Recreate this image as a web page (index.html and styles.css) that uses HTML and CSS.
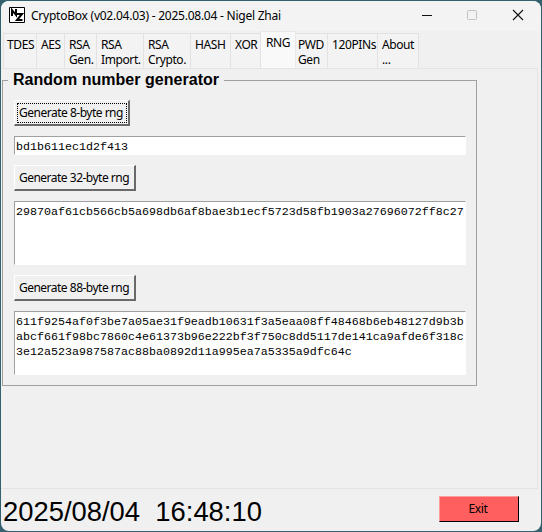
FILE: index.html
```html
<!DOCTYPE html>
<html lang="en">
<head>
<meta charset="utf-8">
<title>CryptoBox</title>
<link rel="stylesheet" href="styles.css">
</head>
<body>
<main class="window">
  <header class="titlebar">
    <svg class="logo" width="16" height="16" viewBox="0 0 16 16"><path d="M.5.5h15v15H.5z" fill="#fff" stroke="#000"/><path d="M3 9V3l4 5V2M8 7h5l-5 6h5.5" fill="none" stroke="#000" stroke-width="2"/></svg>
    <h1 class="title">CryptoBox (v02.04.03) - 2025.08.04 - Nigel Zhai</h1>
    <svg class="controls" width="110" height="16" viewBox="0 0 110 16" fill="none"><path d="M1 8.5h10" stroke="#111"/><rect x="46.5" y="3.5" width="9" height="9" rx="1" stroke="#c2c2c2"/><path d="M92 3l10 10M102 3L92 13" stroke="#111" stroke-width="1.1"/></svg>
  </header>
  <nav class="tabs">
    <div class="tab tdes">TDES</div>
    <div class="tab aes">AES</div>
    <div class="tab gen">RSA<br>Gen.</div>
    <div class="tab import">RSA<br>Import.</div>
    <div class="tab crypto">RSA<br>Crypto.</div>
    <div class="tab hash">HASH</div>
    <div class="tab xor">XOR</div>
    <div class="tab rng active">RNG</div>
    <div class="tab pwd">PWD<br>Gen</div>
    <div class="tab pins">120PINs</div>
    <div class="tab about">About<br>...</div>
  </nav>
  <section class="panel">
    <fieldset class="group">
      <legend>Random number generator</legend>
      <button class="btn short focused">Generate 8-byte rng</button>
      <div class="output single">bd1b611ec1d2f413</div>
      <button class="btn">Generate 32-byte rng</button>
      <div class="output">29870af61cb566cb5a698db6af8bae3b1ecf5723d58fb1903a27696072ff8c27</div>
      <button class="btn">Generate 88-byte rng</button>
      <div class="output">611f9254af0f3be7a05ae31f9eadb10631f3a5eaa08ff48468b6eb48127d9b3babcf661f98bc7860c4e61373b96e222bf3f750c8dd5117de141ca9afde6f318c3e12a523a987587ac88ba0892d11a995ea7a5335a9dfc64c</div>
    </fieldset>
  </section>
  <footer class="footer">
    <div class="clock">2025/08/04  16:48:10</div>
    <button class="exit">Exit</button>
  </footer>
</main>
</body>
</html>
```
FILE: styles.css
```css
* { box-sizing: border-box; }
body {
  margin: 0;
  width: 542px;
  height: 532px;
  overflow: hidden;
  background: #35616f;
  color: #000;
  font: 12px/15px "Noto Sans", sans-serif;
}
.window {
  display: flex;
  flex-direction: column;
  width: 540px;
  height: 530px;
  margin: 1px;
  border-radius: 8px;
  overflow: hidden;
  background: #f0f0f0;
}
.titlebar {
  display: flex;
  align-items: center;
  height: 30px;
  padding: 0 8px 2px 8px;
  background: #f3f3f3;
}
.logo { flex: none; }
.title {
  margin: 0 0 0 6px;
  font-size: 12px;
  font-weight: 400;
  letter-spacing: -.24px;
  white-space: nowrap;
}
.controls { margin-left: auto; margin-right: 2px; }
.tabs {
  display: flex;
  align-items: flex-end;
  height: 37px;
  padding-left: 2px;
}
.tab {
  height: 35px;
  padding: 3px 0 0 3px;
  border: 1px solid #e2e2e2;
  border-width: 1px 1px 0 0;
  background: #f3f3f3;
  letter-spacing: -.4px;
  white-space: nowrap;
}
.tab.active {
  height: 37px;
  padding-top: 3px;
  padding-left: 5px;
  border-color: #e8e8e8;
  background: #f9f9f9;
}
.tdes { width: 34px; border-left-width: 1px; }
.aes { width: 28px; padding-left: 4px; }
.gen { width: 32px; padding-left: 4px; }
.import { width: 47px; padding-left: 4px; }
.crypto { width: 47px; padding-left: 4px; }
.hash { width: 40px; padding-left: 4px; }
.xor { width: 30px; padding-left: 4px; }
.rng { width: 35px; }
.pwd { width: 32px; padding-left: 2px; }
.pins { width: 50px; padding-left: 4px; }
.about { width: 41px; padding-left: 4px; }
.panel {
  width: 537px;
  height: 421px;
  padding: 2px 0 0 1px;
  border: 1px solid #e3e3e3;
  border-left: 0;
}
.group {
  display: flex;
  flex-direction: column;
  align-items: flex-start;
  gap: 10px;
  width: 475px;
  height: 315px;
  margin: 0;
  padding: 11px 10px 0 11px;
  border: 1px solid #a0a0a0;
}
.group legend {
  height: 18px;
  margin-left: -6px;
  padding: 0 5px;
  font: bold 16px/17px "Liberation Sans", sans-serif;
  letter-spacing: .03px;
}
.btn {
  width: 122px;
  height: 26px;
  margin: 0;
  padding: 0 1px 1px 0;
  border: 1px solid #fff;
  border-right: 2px solid #696969;
  border-bottom: 2px solid #696969;
  background: #f0f0f0;
  color: #000;
  font: 12px/15px "Noto Sans", sans-serif;
  letter-spacing: -.5px;
  white-space: nowrap;
}
.btn.short { width: 116px; }
.btn.focused { outline: 1px dotted #000; outline-offset: -4px; }
.output {
  width: 452px;
  height: 64px;
  padding: 3px 1px 0;
  border: 1px solid #a0a0a0;
  border-right-color: #fff;
  border-bottom-color: #fff;
  background: #fff;
  font: 11.66px/15px "Liberation Mono", monospace;
  overflow-wrap: anywhere;
}
.output.single { height: 19px; }
.footer {
  display: flex;
  align-items: flex-start;
  justify-content: space-between;
  padding: 7px 22px 0 2px;
}
.clock {
  font: 27.4px/31px "Liberation Sans", sans-serif;
  white-space: pre;
}
.exit {
  width: 80px;
  height: 26px;
  padding: 0 2px 1px 0;
  border: 1px solid #ff9c9c;
  border-right: 1px solid #000;
  border-bottom: 1px solid #000;
  background: #ff5f5f;
  color: #000;
  font: 12px/15px "Noto Sans", sans-serif;
  letter-spacing: -.3px;
}
```
